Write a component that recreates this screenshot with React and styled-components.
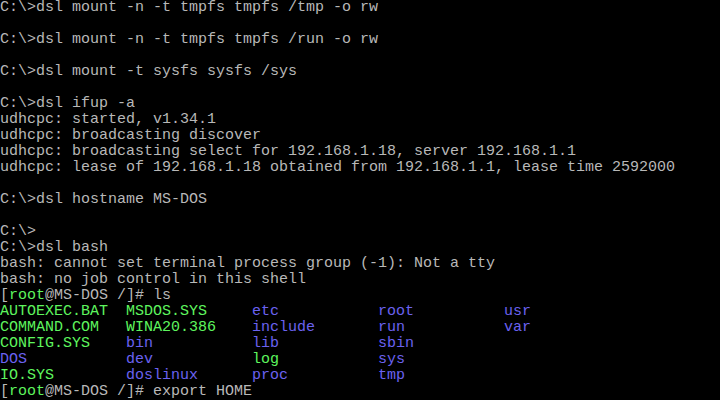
import React from "react";
import styled, { createGlobalStyle } from "styled-components";

const Global = createGlobalStyle`
  html, body { margin: 0; padding: 0; background: #000; }
  body { width: 720px; height: 400px; overflow: hidden; }
`;

const Screen = styled.div`
  width: 720px;
  height: 400px;
  background: #000;
  color: #b8b8b8;
  font-family: "Liberation Mono", "DejaVu Sans Mono", monospace;
  font-size: 15px;
  line-height: 16px;
  display: flex;
  flex-direction: column;
  overflow: hidden;
`;

const Line = styled.div`
  height: 16px;
  white-space: pre;
`;

const Grid = styled.div`
  display: grid;
  grid-template-columns: repeat(4, 126px) 1fr;
  grid-auto-flow: column;
  grid-template-rows: repeat(5, 16px);
`;

const Cell = styled.span`
  white-space: pre;
  color: ${(p) => (p.$kind === "exe" ? "#5ef55e" : "#6b62f0")};
`;

const Green = styled.span`
  color: #5ef55e;
`;

const lines = [
  "C:\\>dsl mount -n -t tmpfs tmpfs /tmp -o rw",
  "",
  "C:\\>dsl mount -n -t tmpfs tmpfs /run -o rw",
  "",
  "C:\\>dsl mount -t sysfs sysfs /sys",
  "",
  "C:\\>dsl ifup -a",
  "udhcpc: started, v1.34.1",
  "udhcpc: broadcasting discover",
  "udhcpc: broadcasting select for 192.168.1.18, server 192.168.1.1",
  "udhcpc: lease of 192.168.1.18 obtained from 192.168.1.1, lease time 2592000",
  "",
  "C:\\>dsl hostname MS-DOS",
  "",
  "C:\\>",
  "C:\\>dsl bash",
  "bash: cannot set terminal process group (-1): Not a tty",
  "bash: no job control in this shell",
];

const files = [
  ["AUTOEXEC.BAT", "exe"],
  ["COMMAND.COM", "exe"],
  ["CONFIG.SYS", "exe"],
  ["DOS", "dir"],
  ["IO.SYS", "exe"],
  ["MSDOS.SYS", "exe"],
  ["WINA20.386", "exe"],
  ["bin", "dir"],
  ["dev", "dir"],
  ["doslinux", "dir"],
  ["etc", "dir"],
  ["include", "dir"],
  ["lib", "dir"],
  ["log", "exe"],
  ["proc", "dir"],
  ["root", "dir"],
  ["run", "dir"],
  ["sbin", "dir"],
  ["sys", "dir"],
  ["tmp", "dir"],
  ["usr", "dir"],
  ["var", "dir"],
];

const Prompt = ({ cmd }) => (
  <Line>
    [<Green>root</Green>@MS-DOS /]# {cmd}
  </Line>
);

export default function App() {
  return (
    <>
      <Global />
      <Screen>
        {lines.map((l, i) => (
          <Line key={i}>{l}</Line>
        ))}
        <Prompt cmd="ls" />
        <Grid>
          {files.map(([name, kind]) => (
            <Cell key={name} $kind={kind}>
              {name}
            </Cell>
          ))}
        </Grid>
        <Prompt cmd="export HOME" />
      </Screen>
    </>
  );
}
